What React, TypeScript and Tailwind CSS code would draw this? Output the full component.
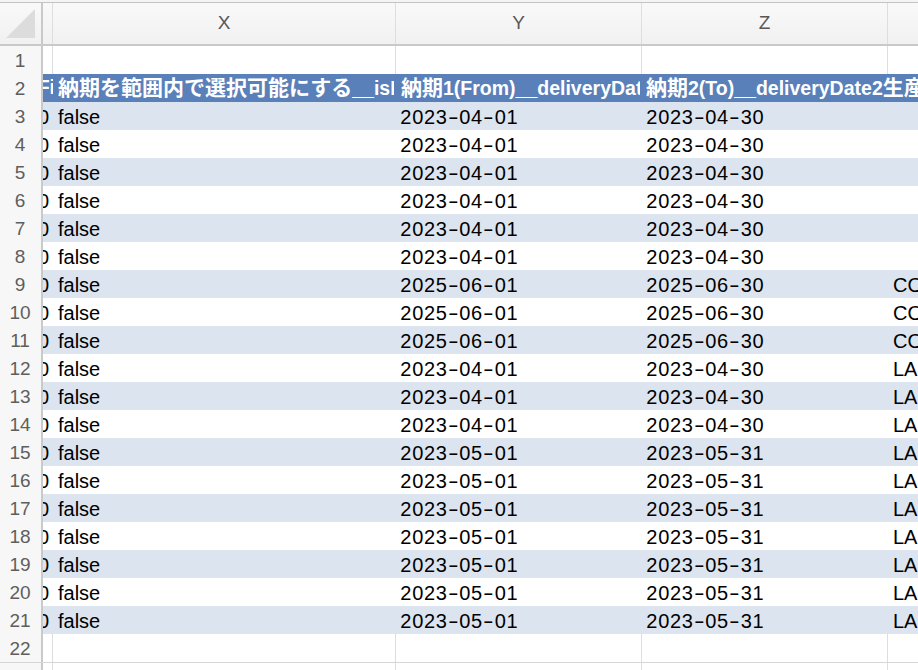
const STRIPE = 'bg-[#dce4ef]';

type Row = { n: number; x: string; y: string; z: string; aa: string };

const rows: Row[] = [
  ...[3, 4, 5, 6, 7, 8].map((n) => ({ n, x: 'false', y: '2023-04-01', z: '2023-04-30', aa: '' })),
  ...[9, 10, 11].map((n) => ({ n, x: 'false', y: '2025-06-01', z: '2025-06-30', aa: 'CO' })),
  ...[12, 13, 14].map((n) => ({ n, x: 'false', y: '2023-04-01', z: '2023-04-30', aa: 'LA' })),
  ...[15, 16, 17, 18, 19, 20, 21].map((n) => ({ n, x: 'false', y: '2023-05-01', z: '2023-05-31', aa: 'LA' })),
];

const RowNum = ({ n }: { n: number | string }) => (
  <div className="w-[43px] shrink-0 border-r-2 border-[#c9c9c9] bg-[#f7f7f7] flex items-center justify-center pr-[1px] pt-[3px] text-[19px] text-[#5e5e5e]">
    {n}
  </div>
);

// dates are drawn with even-width characters, as in the sheet
const DateText = ({ value }: { value: string }) => (
  <span className="flex">
    {value.split('').map((c, i) => (
      <span key={i} className="inline-block w-[11.8px] text-center">
        {c === '-' ? <span className="inline-block scale-x-[1.6]">-</span> : c}
      </span>
    ))}
  </span>
);

// header labels: kanji/kana a bit larger than the latin part
const Label = ({ text }: { text: string }) => (
  <span>
    {text.split(/([\u3040-\u30ff\u4e00-\u9fff]+)/).map((part, i) =>
      /[\u3040-\u30ff\u4e00-\u9fff]/.test(part) ? (
        <span key={i} className="font-['Noto_Sans_CJK_JP',sans-serif] text-[21px]">{part}</span>
      ) : (
        <span key={i}>{part}</span>
      )
    )}
  </span>
);

const EmptyRow = ({ n }: { n: number }) => (
  <div className="flex h-[28px]">
    <RowNum n={n} />
    <div className="w-[10px] shrink-0 border-r border-[#dedede]" />
    <div className="w-[343px] shrink-0 border-r border-[#dedede]" />
    <div className="w-[246px] shrink-0 border-r border-[#dedede]" />
    <div className="w-[246px] shrink-0 border-r border-[#dedede]" />
    <div className="flex-1" />
  </div>
);

export default function App() {
  return (
    <div className="w-[918px] h-[670px] overflow-hidden bg-white font-['Liberation_Sans','Noto_Sans_CJK_JP',sans-serif] text-black">
      {/* column letters */}
      <div className="h-[3px] bg-[#f4f4f4] border-b border-[#c4c4c4]" />
      <div className="flex h-[43px] bg-gradient-to-b from-[#f9f9f9] to-[#f1f1f1] border-b-2 border-[#c9c9c9] text-[19px] text-[#575757]">
        <div className="w-[43px] shrink-0 border-r-2 border-[#c9c9c9] flex items-center justify-center">
          <svg width="30" height="30" viewBox="0 0 30 30">
            <polygon points="29,0 29,29 0,29" fill="#dcdcdc" />
          </svg>
        </div>
        <div className="w-[10px] shrink-0 border-r border-[#dedede]" />
        <div className="w-[343px] shrink-0 border-r border-[#dedede] flex items-center justify-center">X</div>
        <div className="w-[246px] shrink-0 border-r border-[#dedede] flex items-center justify-center">Y</div>
        <div className="w-[246px] shrink-0 border-r border-[#dedede] flex items-center justify-center">Z</div>
        <div className="flex-1" />
      </div>

      <EmptyRow n={1} />

      {/* table header */}
      <div className="flex h-[28px]">
        <RowNum n={2} />
        <div className="flex-1 flex bg-[#5a80b9] text-white font-bold text-[19.5px] leading-none whitespace-nowrap">
          <div className="w-[10px] shrink-0 overflow-hidden flex justify-end items-center pb-[1px]">
            <span className="mr-[-2px]">Fi</span>
          </div>
          <div className="w-[343px] shrink-0 overflow-hidden flex items-center pl-[5px] pr-[2px] pb-[1px]">
            <span className="overflow-hidden">
              <Label text="納期を範囲内で選択可能にする__isDeliveryDateRange" />
            </span>
          </div>
          <div className="w-[246px] shrink-0 overflow-hidden flex items-center pl-[5px] pr-[2px] pb-[1px]">
            <span className="overflow-hidden">
              <Label text="納期1(From)__deliveryDate1" />
            </span>
          </div>
          <div className="w-[246px] shrink-0 flex items-center pl-[4px] pb-[1px]">
            <Label text="納期2(To)__deliveryDate2生産者" />
          </div>
        </div>
      </div>

      {rows.map((r) => {
        const fill = r.n % 2 === 1 ? STRIPE : 'bg-white';
        return (
          <div key={r.n} className="flex h-[28px]">
            <RowNum n={r.n} />
            <div className={`flex-1 flex ${fill} text-[20px] pt-[2px] whitespace-nowrap`}>
              <div className="w-[10px] shrink-0 overflow-hidden flex justify-end items-center">
                <span className="mr-[4px]">0</span>
              </div>
              <div className="w-[343px] shrink-0 flex items-center pl-[5px]">{r.x}</div>
              <div className="w-[246px] shrink-0 flex items-center pl-[4px]">
                <DateText value={r.y} />
              </div>
              <div className="w-[246px] shrink-0 flex items-center pl-[4px]">
                <DateText value={r.z} />
              </div>
              <div className="flex-1 flex items-center pl-[5px]">{r.aa}</div>
            </div>
          </div>
        );
      })}

      <EmptyRow n={22} />
      <div className="flex h-[10px] border-t border-[#d6d6d6]">
        <div className="w-[43px] shrink-0 border-r-2 border-[#c9c9c9] bg-[#f7f7f7]" />
        <div className="w-[10px] shrink-0 border-r border-[#dedede]" />
        <div className="w-[343px] shrink-0 border-r border-[#dedede]" />
        <div className="w-[246px] shrink-0 border-r border-[#dedede]" />
        <div className="w-[246px] shrink-0 border-r border-[#dedede]" />
      </div>
    </div>
  );
}
